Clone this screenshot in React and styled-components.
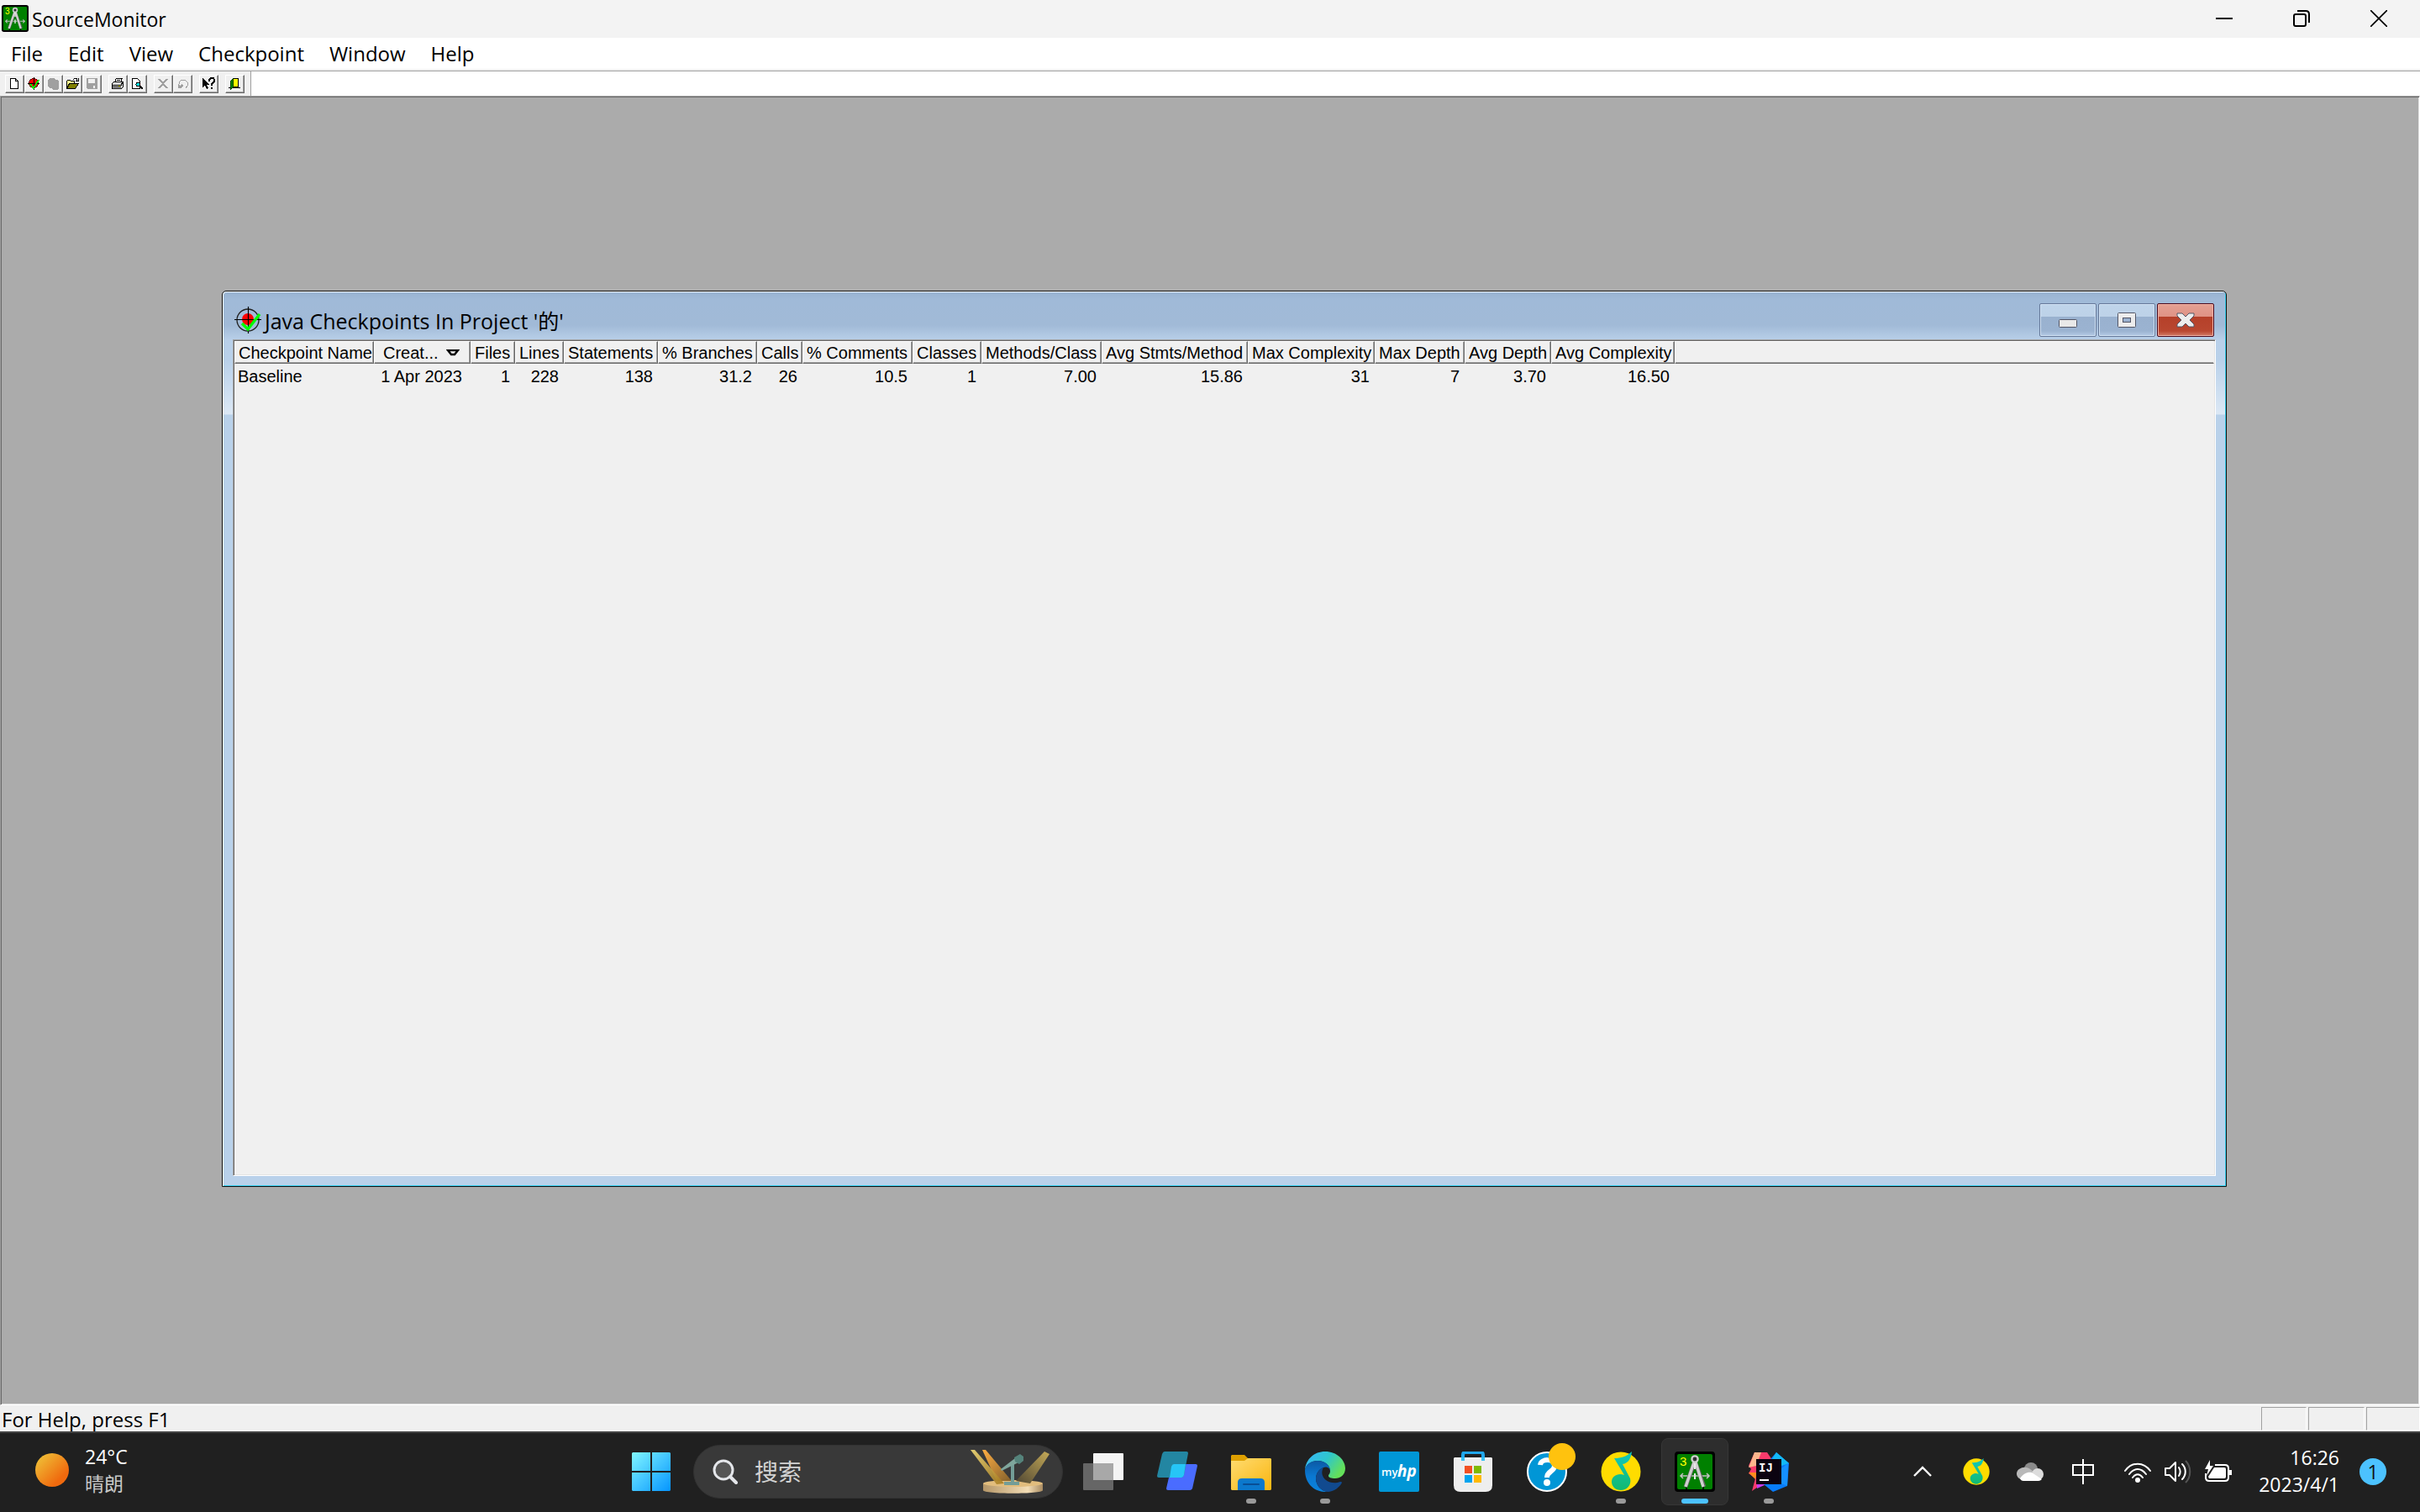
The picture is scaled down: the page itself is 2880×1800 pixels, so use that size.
import styled, { createGlobalStyle } from "styled-components";

const GlobalStyle = createGlobalStyle`
  * {
    box-sizing: border-box;
  }

  body {
    margin: 0;
    font-family: "Open Sans", "Noto Sans CJK SC", sans-serif;
    font-size: 24px;
    color: #000;
  }

  button,
  input {
    font: inherit;
    color: inherit;
    margin: 0;
    padding: 0;
    border: 0;
    background: none;
  }

  svg {
    display: block;
    flex: none;
  }
`;

const Screen = styled.div`
  display: flex;
  flex-direction: column;
  min-height: 100vh;
  background: #f0f0f0;
`;

/* ---------- main window ---------- */

const TitleBar = styled.header`
  display: flex;
  align-items: center;
  height: 45px;
  padding: 0 3px 2px 2px;
  background: #f3f3f3;
`;

const AppTitle = styled.h1`
  flex: 1;
  margin: 0;
  padding: 3px 0 0 4px;
  font-size: 23px;
  line-height: 32px;
  font-weight: 400;
`;

const CaptionButton = styled.button`
  display: flex;
  align-items: center;
  justify-content: center;
  width: 92px;
  height: 43px;
`;

const MenuBar = styled.nav`
  display: flex;
  height: 39px;
  background: #fff;
  border-bottom: 2px solid #f0f0f0;
`;

const MenuItem = styled.button`
  padding: 0 17px 0 13px;
  line-height: 37px;
`;

const ToolBar = styled.div`
  display: flex;
  height: 30px;
  background: #fff;
  border-top: 1px solid #a0a0a0;
`;

const ToolBand = styled.div`
  display: flex;
  align-items: center;
  gap: 8px;
  padding: 0 7px 0 6px;
  background: #f0f0f0;
  border-right: 1px solid #a0a0a0;
`;

const ToolGroup = styled.div`
  display: flex;
`;

const ToolButton = styled.button`
  display: flex;
  align-items: center;
  justify-content: center;
  width: 23px;
  height: 22px;
  padding: 0 2px 0 0;
  border: 1px solid;
  border-color: #fff #696969 #696969 #fff;
  box-shadow: inset -1px -1px 0 #a0a0a0;
`;

const Workspace = styled.main`
  position: relative;
  flex: 1;
  background: #ababab;
  border: 1px solid;
  border-color: #a0a0a0 #fff #fff #a0a0a0;
  box-shadow: inset 1px 1px 0 #696969, inset -1px -1px 0 #e3e3e3;
`;

const StatusBar = styled.footer`
  display: flex;
  gap: 2px;
  height: 31px;
  padding: 2px 0 1px 2px;
`;

const StatusText = styled.span`
  flex: 1;
  line-height: 30px;
`;

const StatusPane = styled.span`
  width: ${(props) => props.$width}px;
  border: 1px solid;
  border-color: #a0a0a0 #fff #fff #a0a0a0;
`;

/* ---------- checkpoints window ---------- */

const ChildWindow = styled.section`
  position: absolute;
  inset: 231px 229px 259px 263px;
  display: flex;
  flex-direction: column;
  padding: 1px 12px 12px;
  border: 1px solid #111;
  border-radius: 5px 5px 0 0;
  box-shadow: inset 1px 1px 0 #f4fafd, inset -1px -1px 0 #35d0ee;
  background: linear-gradient(
    #98b3d1 0,
    #a0bad8 10px,
    #a1bad7 40px,
    #b9d0e9 58px,
    #b9d1ea 82px,
    #dce8f5 146px,
    #b9d1ea 147px
  );
`;

const ChildTitleBar = styled.div`
  display: flex;
  align-items: flex-start;
  gap: 2px;
  height: 56px;
  padding: 13px 2px 0;
`;

const ChildIcon = styled.div`
  padding-top: 4px;
`;

const ChildTitle = styled.h2`
  flex: 1;
  margin: 0;
  padding: 5px 0 0 2px;
  font-size: 25px;
  line-height: 32px;
  font-weight: 400;
`;

const ChildButton = styled.button`
  display: flex;
  align-items: center;
  justify-content: center;
  width: 68px;
  height: 40px;
  border: 1px solid ${(props) => (props.$danger ? "#4b0a1c" : "#66799a")};
  border-radius: 2px;
  box-shadow: inset 0 0 0 1px ${(props) => (props.$danger ? "#efb0a4" : "#cfe0f2")};
  background: ${(props) =>
    props.$danger
      ? "linear-gradient(#e3a093 0, #df9285 15px, #b5402a 15px, #b94730 32px, #d27c66 38px)"
      : "linear-gradient(#bfd4ea 0, #bdd2e8 15px, #99b1cf 15px, #9bb3d1 32px, #b5cbe5 38px)"};
`;

const Client = styled.div`
  flex: 1;
  background: #f0f0f0;
  border: 1px solid;
  border-color: #a0a0a0 #fff #fff #a0a0a0;
  padding: 1px;
  box-shadow: inset 1px 1px 0 #696969, inset -1px -1px 0 #e3e3e3;
`;

const Grid = styled.table`
  width: 100%;
  table-layout: fixed;
  border-collapse: separate;
  border-spacing: 0;
  font-family: "Liberation Sans", Arial, sans-serif;
  font-size: 20px;
  line-height: 22px;
`;

const HeadCell = styled.th`
  height: 27px;
  padding: 1px 5px 0 4px;
  font-weight: 400;
  text-align: ${(props) => props.$align || "right"};
  white-space: nowrap;
  border: 1px solid;
  border-color: #fff ${(props) => (props.$last ? "#f0f0f0" : "#696969")} #696969 #fff;
  box-shadow: inset ${(props) => (props.$last ? 0 : -1)}px -1px 0 #a0a0a0;
`;

const SortLabel = styled.span`
  display: flex;
  align-items: center;
  gap: 9px;
  padding-left: 6px;
`;

const Cell = styled.td`
  height: 29px;
  padding: 0 6px 0 4px;
  text-align: ${(props) => props.$align || "right"};
  white-space: nowrap;
`;

/* ---------- taskbar ---------- */

const TaskBar = styled.footer`
  display: grid;
  grid-template-columns: 1fr auto 1fr;
  align-items: center;
  height: 96px;
  color: #fff;
  background: #202020;
  box-shadow: inset 0 2px 0 #434343;
`;

const Weather = styled.button`
  display: flex;
  align-items: center;
  justify-self: start;
  gap: 19px;
  padding: 0 0 4px 42px;
  font-size: 23px;
  line-height: 32px;
  text-align: left;
`;

const Sun = styled.span`
  width: 40px;
  height: 40px;
  border-radius: 50%;
  background: linear-gradient(135deg, #efbe36 10%, #f06a0e 75%);
`;

const Condition = styled.span`
  display: block;
  color: #c8c8c8;
`;

const Apps = styled.div`
  display: flex;
  align-items: center;
`;

const AppSlot = styled.button`
  position: relative;
  display: flex;
  align-items: center;
  justify-content: center;
  width: 80px;
  height: 80px;
  margin: 0 4px;
  border-radius: 8px;
  background: ${(props) => (props.$active ? "#2d2d2d" : "none")};
  border: 1px solid ${(props) => (props.$active ? "#363636" : "transparent")};

  &::after {
    content: "";
    position: absolute;
    bottom: 1px;
    width: ${(props) => (props.$active ? 32 : 12)}px;
    height: 6px;
    border-radius: 3px;
    background: ${(props) => (props.$active ? "#4cc2ff" : "#9a9a9a")};
    display: ${(props) => (props.$running ? "block" : "none")};
  }
`;

const SearchBox = styled.label`
  display: flex;
  align-items: center;
  width: 440px;
  height: 64px;
  margin: 0 4px 0 6px;
  padding: 0 14px 0 22px;
  border: 1px solid #323232;
  border-radius: 32px;
  background: #393939;
`;

const SearchInput = styled.input`
  flex: 1;
  min-width: 0;
  margin-left: 20px;
  font-size: 28px;
  line-height: 40px;

  &::placeholder {
    color: #d2d2d2;
    opacity: 1;
  }
`;

const Tray = styled.div`
  display: flex;
  align-items: center;
  justify-self: end;
  padding-right: 40px;
`;

const TrayButton = styled.button`
  display: flex;
  align-items: center;
  justify-content: center;
  width: 64px;
  height: 80px;
`;

const QuickSettings = styled.button`
  display: flex;
  gap: 16px;
  padding: 0 8px;
  margin-left: 8px;
`;

const Clock = styled.button`
  width: 120px;
  margin-right: 24px;
  padding-bottom: 2px;
  font-size: 23px;
  line-height: 32px;
  text-align: right;
`;

const Badge = styled.button`
  width: 32px;
  height: 32px;
  border-radius: 50%;
  font-size: 23px;
  line-height: 32px;
  color: #111;
  background: #4cc2ff;
`;

/* ---------- drawings ---------- */

const CompassIcon = ({ size }) => (
  <svg width={size} height={size} viewBox="0 0 48 48">
    <rect width="48" height="48" rx="4" fill="#000" />
    <rect x="3" y="3" width="42" height="42" rx="2" fill="#008000" />
    <text x="6" y="17" fontSize="15" fontFamily="Liberation Sans" fill="#ff0">
      3
    </text>
    <path d="M14 45v-4M34 45v-4" stroke="#000" strokeWidth="1.5" />
    <path d="M7 29h34M10 26l-3 3 3 3M38 26l3 3-3 3" fill="none" stroke="#c0c0c0" strokeWidth="1.6" />
    <path d="M23 14L13 42M25 14l10 28" stroke="#666" strokeWidth="5" />
    <path d="M23 13L13 42M25 13l9 29" stroke="#d0d0d0" strokeWidth="3.4" />
    <path d="M24 13v8M24 26v7" stroke="#e8e8e8" strokeWidth="2" />
    <circle cx="24" cy="9" r="3.6" fill="#333" stroke="#ccc" strokeWidth="2.4" />
  </svg>
);

const TargetIcon = () => (
  <svg width="32" height="32" viewBox="0 0 32 32">
    <ellipse cx="16" cy="16" rx="13" ry="13" fill="none" stroke="#222" strokeWidth="1.3" />
    <circle cx="16" cy="15" r="7" fill="#f00" />
    <path d="M16.500 0v32M0 15.500h32" stroke="#000" strokeWidth="1.2" />
    <path d="M9 20l7 7L30 9" fill="none" stroke="#0f0" strokeWidth="3.4" />
  </svg>
);

const toolIcons = {
  new: <path d="M3.500 1.500h6l3 3v9h-9zM9.500 1.500v3h3" fill="#fff" stroke="#000" />,
  checkpoint: (
    <>
      <circle cx="8" cy="7" r="5.500" fill="#f00" stroke="#600" />
      <path d="M8 0v15M1 7.500h14" stroke="#000" />
      <path d="M4 8l4 5 6-10" fill="none" stroke="#0e0" strokeWidth="2" />
    </>
  ),
  copy: <path d="M2 3l3-2h4l2 2h2l2 2v8l-2 2H8l-2-2H4l-2-3z" fill="#a0a0a0" />,
  open: (
    <>
      <path d="M1.500 13V4.500l1-1h3l1 1h4V7" fill="#ffff90" stroke="#000" />
      <path d="M1.500 13.500l3-6h11l-4 6z" fill="#808000" stroke="#000" />
      <path d="M9 2.500l2-1h2l1 2M15 1v3h-3" fill="none" stroke="#000" />
    </>
  ),
  save: (
    <>
      <path d="M2 1h13v13H3l-1-1z" fill="#a0a0a0" />
      <path d="M4 2h8v5H4zM10 10h2v3h-2z" fill="#f0f0f0" />
    </>
  ),
  print: (
    <>
      <path d="M4.500 6l2-5h7l-2 5" fill="#fff" stroke="#000" />
      <path d="M1.500 7.500l2-2h11v6l-2 2h-11z" fill="#d8d8d8" stroke="#000" />
      <path d="M2 9.500h11M2 11.500h10M7 3.500h4M14 6l-2 3" stroke="#000" />
      <path d="M9 10.500h2" stroke="#ff0" />
    </>
  ),
  preview: (
    <>
      <path d="M2.500 1.500h6l3 3v9h-9z" fill="#fff" stroke="#000" />
      <circle cx="9.500" cy="8.500" r="2.500" fill="#0ee" stroke="#000" />
      <path d="M11 10l4 4" stroke="#000" strokeWidth="2" />
    </>
  ),
  remove: <path d="M3 2l10 11M13 2L3 13" stroke="#a0a0a0" strokeWidth="2" />,
  undo: (
    <>
      <path d="M4 8V6l3-3h4l3 3v4l-2 3" fill="none" stroke="#a0a0a0" />
      <path d="M3 13V8l2 2 2-2 2 2-2 3z" fill="#a0a0a0" />
    </>
  ),
  help: (
    <>
      <path d="M1 1v11l3-2 2 4 2-1-2-4h3z" fill="#000" />
      <path d="M9 5V3l2-2h3l1 2v2l-3 3v2M12 12v2" fill="none" stroke="#000" strokeWidth="2" />
    </>
  ),
  exit: (
    <>
      <path d="M1 12.500h14" stroke="#000" />
      <path d="M6.500 1.500h6v10h-6z" fill="#ff0" stroke="#000" />
      <path d="M3.500 4.500l3-3v10l-3 3z" fill="#008000" stroke="#040" />
    </>
  ),
};

const ToolIcon = ({ name }) => (
  <svg width="16" height="15" viewBox="0 0 16 15" shapeRendering="crispEdges">
    {toolIcons[name]}
  </svg>
);

const StartIcon = () => (
  <svg width="46" height="46" viewBox="0 0 46 46">
    <defs>
      <linearGradient id="start" gradientUnits="userSpaceOnUse" x1="0" y1="0" x2="46" y2="46">
        <stop offset="0" stopColor="#80f6ff" />
        <stop offset="1" stopColor="#0595ff" />
      </linearGradient>
    </defs>
    <path
      d="M1 0h21v22H0V1zM24 0h21l1 1v21H24zM0 24h22v22H1l-1-1zM24 24h22v21l-1 1H24z"
      fill="url(#start)"
    />
  </svg>
);

const SearchIcon = () => (
  <svg width="30" height="30" viewBox="0 0 30 30" fill="none" stroke="#e4e6ea">
    <circle cx="13" cy="13" r="11" fill="#555" strokeWidth="3" />
    <path d="M21 21l7 7" strokeWidth="4" strokeLinecap="round" />
  </svg>
);

const StageIcon = () => (
  <svg width="95" height="54" viewBox="0 0 95 54">
    <defs>
      <linearGradient id="beamA" x1="0" y1="0" x2="1" y2="1">
        <stop offset="0" stopColor="#f4dc78" />
        <stop offset="1" stopColor="#a3781e" />
      </linearGradient>
      <linearGradient id="beamB" x1="0" y1="0" x2="1" y2="1">
        <stop offset="0" stopColor="#ffae42" />
        <stop offset="1" stopColor="#83602c" />
      </linearGradient>
      <linearGradient id="beamC" x1="1" y1="0" x2="0" y2="1">
        <stop offset="0" stopColor="#c4a957" />
        <stop offset="1" stopColor="#504733" />
      </linearGradient>
      <linearGradient id="stage" x1="0" y1="0" x2="1" y2="0">
        <stop offset="0" stopColor="#b49668" />
        <stop offset="0.750" stopColor="#f3ddb5" />
        <stop offset="1" stopColor="#a98b61" />
      </linearGradient>
    </defs>
    <path d="M15 41v8c0 5 71 5 71 0v-8z" fill="url(#stage)" />
    <ellipse cx="50.500" cy="41" rx="35.500" ry="4" fill="#e2bd7d" />
    <path d="M14 1h4l31 37H31z" fill="url(#beamB)" />
    <path d="M0 1h5l35 40-9 1z" fill="url(#beamA)" opacity="0.900" />
    <path d="M88 3l6 3-23 35-17-3z" fill="url(#beamC)" />
    <path d="M48 17h4v22h6v4H40v-4h8z" fill="#739d97" />
    <path d="M36 24l17-13 4 5-20 10z" fill="#7fa69c" />
    <path d="M52 10l7-4 4 3v5l-5 4-5-3z" fill="#55837b" />
  </svg>
);

const TaskViewIcon = () => (
  <svg width="48" height="48" viewBox="0 0 48 48">
    <rect x="12" y="2" width="36" height="32" rx="1" fill="#f4f4f4" />
    <rect y="14" width="36" height="32" rx="1" fill="#666" />
    <path d="M12 14h24v20H12z" fill="#a8a8a8" />
  </svg>
);

const TilesIcon = () => (
  <svg width="48" height="48" viewBox="0 0 48 48">
    <path d="M20 15h26q2 0 2 2l-6 27q-1 2-3 2H13q-2 0-2-2l6-26q1-3 3-3z" fill="#4a6cff" />
    <path d="M9 0h26q2 0 2 2l-5 26q-1 3-3 3H2q-2 0-2-2L6 3q1-3 3-3z" fill="#2386a2" />
    <path d="M20 15h14l-2 13q-1 3-3 3H15l2-13q1-3 3-3z" fill="#26c6f7" />
  </svg>
);

const FolderIcon = () => (
  <svg width="48" height="48" viewBox="0 0 48 48">
    <defs>
      <linearGradient id="folder" x1="0" y1="0" x2="1" y2="1">
        <stop offset="0" stopColor="#ffdc70" />
        <stop offset="1" stopColor="#fab510" />
      </linearGradient>
    </defs>
    <path d="M1 4h15l5 5v8H0V5z" fill="#dfa000" />
    <path d="M0 11h16l4-3h27l1 1v36l-1 1H1l-1-1z" fill="url(#folder)" />
    <path d="M8 46v-9q0-5 5-5h22q5 0 5 5v9z" fill="#0b78cc" />
    <path d="M15 39h18" stroke="#084e94" strokeWidth="2" strokeLinecap="round" />
  </svg>
);

const EdgeIcon = () => (
  <svg width="48" height="48" viewBox="0 0 48 48">
    <defs>
      <linearGradient id="edgeTop" x1="0" y1="0" x2="1" y2="0.500">
        <stop offset="0.100" stopColor="#35b8f5" />
        <stop offset="0.550" stopColor="#2fc6cb" />
        <stop offset="1" stopColor="#64e05a" />
      </linearGradient>
      <linearGradient id="edgeLeft" x1="0" y1="0" x2="0" y2="1">
        <stop offset="0" stopColor="#0c59a4" />
        <stop offset="0.500" stopColor="#0a78d2" />
        <stop offset="1" stopColor="#0b83dc" />
      </linearGradient>
    </defs>
    <path
      d="M0 22C1 9 11 0 24 0c14 0 24 10 24 20 0 8-6 12-12 12-5 0-8-1-8-3s2-2 2-6c0-6-6-12-15-12C7 11 1 16 0 22z"
      fill="url(#edgeTop)"
    />
    <path
      d="M0 22c1-7 7-11 15-11 9 0 15 5 15 12-1-5-6-5-8-4-6 2-9 8-9 13 0 8 6 15 14 16C12 49 0 39 0 22z"
      fill="url(#edgeLeft)"
    />
    <path
      d="M22 19c-6 2-9 8-9 13 0 9 7 16 15 16 7-1 13-5 16-11 0-1-1-1-2-1-5 2-12 2-17-2-5-4-6-10-3-15z"
      fill="#114a8f"
    />
  </svg>
);

const MyHpIcon = () => (
  <svg width="48" height="48" viewBox="0 0 48 48" fill="#fff">
    <rect width="48" height="48" rx="2" fill="#0096d6" />
    <text x="3" y="29" fontFamily="Open Sans" fontSize="13" fontWeight="600">
      my
    </text>
    <text x="22" y="30" fontFamily="Open Sans" fontSize="19" fontWeight="700" fontStyle="italic">
      hp
    </text>
  </svg>
);

const StoreIcon = () => (
  <svg width="46" height="48" viewBox="0 0 46 48">
    <path d="M11 11V4q0-3 3-3h18q3 0 3 3v7" fill="none" stroke="#21a7ec" strokeWidth="4" />
    <path d="M1 7h44l1 1v32q0 8-8 8H8q-8 0-8-8V8z" fill="#eee" />
    <path d="M11 7v4M35 7v4" stroke="#35c1f4" strokeWidth="4" />
    <path d="M13 17h9v9h-9z" fill="#f25022" />
    <path d="M24 17h9v9h-9z" fill="#7fba00" />
    <path d="M13 28h9v9h-9z" fill="#00a4ef" />
    <path d="M24 28h9v9h-9z" fill="#ffb900" />
  </svg>
);

const HelpIcon = () => (
  <svg width="48" height="48" viewBox="0 0 48 48" overflow="visible">
    <circle cx="24" cy="24" r="23" fill="#0096d6" stroke="#fff" strokeWidth="2" />
    <path d="M16 16c1-8 17-8 17 1 0 7-9 6-9 14" fill="none" stroke="#fff" strokeWidth="6" />
    <circle cx="24" cy="37" r="4" fill="#fff" />
    <circle cx="42" cy="6" r="16" fill="#ffc20e" />
  </svg>
);

const MusicIcon = ({ size }) => (
  <svg width={size} height={size} viewBox="0 0 48 48">
    <defs>
      <linearGradient id="note" x1="0" y1="0" x2="0" y2="1">
        <stop offset="0" stopColor="#12c8c0" />
        <stop offset="1" stopColor="#12b970" />
      </linearGradient>
    </defs>
    <circle cx="24" cy="24" r="23.500" fill="#ffdc00" />
    <path
      d="M16 8c8 0 15-2 21-8-1 8-4 14-11 15l9 17c2 8-4 14-11 14-7 0-11-5-11-10 0-7 8-11 15-8z"
      fill="url(#note)"
    />
  </svg>
);

const IntelliJIcon = () => (
  <svg width="48" height="48" viewBox="0 0 48 48">
    <path d="M7 1l15 0 6 9-14 30L4 47l4-15-8-6 3-5-3-4z" fill="#f93a6b" />
    <path d="M7 1l8 0-6 16-9 2z" fill="#fdb68c" />
    <path d="M0 25l10 0-2 8z" fill="#ff8b1e" />
    <path d="M9 31l12 8-11 5z" fill="#c73cf0" />
    <path d="M33 1l15 13-2 27-17 7-11-9 8-30z" fill="#087cfa" />
    <path d="M33 1l15 13-9 3-13-5z" fill="#13b9f5" />
    <path d="M39 20l8-6-1 27-7-3z" fill="#1590ff" />
    <path d="M9 9h30v30H9z" fill="#0b0310" />
    <text x="12" y="24" fontFamily="Liberation Mono" fontSize="14" fontWeight="700" fill="#fff">
      IJ
    </text>
    <path d="M13 33h11v2H13z" fill="#fff" />
  </svg>
);

const CloudIcon = () => (
  <svg width="32" height="22" viewBox="0 0 32 22">
    <circle cx="17" cy="8" r="8" fill="#8b8b8b" />
    <path d="M8 6c5-1 8 2 12 5L5 20C-3 17-1 7 8 6z" fill="#b9b9b9" />
    <circle cx="25" cy="14" r="7" fill="#dcdcdc" />
    <path d="M4 19c4-6 9-8 14-7l12 8q-2 2-4 2H8q-3 0-4-3z" fill="#fff" />
  </svg>
);

const WifiIcon = () => (
  <svg width="32" height="28" viewBox="0 0 32 28" fill="none" stroke="#fff" strokeWidth="2">
    <path d="M1 13C9 2 23 2 31 13M6 17c6-8 14-8 20 0M10 21c4-5 8-5 12 0" strokeLinecap="round" />
    <circle cx="16" cy="24" r="2" fill="#fff" />
  </svg>
);

const SpeakerIcon = () => (
  <svg width="32" height="28" viewBox="0 0 32 28" fill="none" stroke="#fff" strokeWidth="2">
    <path d="M1 10h5l7-7v22l-7-7H1z" strokeLinejoin="round" />
    <path d="M17 9c2 3 2 7 0 10M21 5c5 5 5 13 0 18" strokeLinecap="round" />
    <path d="M25 1c7 7 7 19 0 26" stroke="#555" />
  </svg>
);

const BatteryIcon = () => (
  <svg width="32" height="28" viewBox="0 0 32 28" fill="none" stroke="#fff" strokeWidth="2">
    <path d="M12 6h12q4 0 4 4v11q0 4-4 4H5q-4 0-4-4v-5" />
    <path d="M11 9h12q2 0 2 2v9q0 2-2 2H5l-1-2z" fill="#fff" stroke="none" />
    <path d="M28 12h4v6h-4z" fill="#fff" stroke="none" />
    <path d="M6 0L0 11h4l-2 8 8-12H6z" fill="#fff" stroke="none" />
  </svg>
);

/* ---------- data ---------- */

const menus = ["File", "Edit", "View", "Checkpoint", "Window", "Help"];

const tools = [
  ["new", "checkpoint", "copy", "open", "save"],
  ["print", "preview"],
  ["remove", "undo"],
  ["help"],
  ["exit"],
];

const columns = [
  { label: "Checkpoint Name", width: 166, value: "Baseline", align: "left" },
  { label: "Creat...", width: 115, value: "1 Apr 2023", align: "center", sorted: true },
  { label: "Files", width: 53, value: "1" },
  { label: "Lines", width: 58, value: "228" },
  { label: "Statements", width: 112, value: "138" },
  { label: "% Branches", width: 118, value: "31.2" },
  { label: "Calls", width: 54, value: "26" },
  { label: "% Comments", width: 131, value: "10.5" },
  { label: "Classes", width: 82, value: "1" },
  { label: "Methods/Class", width: 143, value: "7.00" },
  { label: "Avg Stmts/Method", width: 174, value: "15.86" },
  { label: "Max Complexity", width: 151, value: "31" },
  { label: "Max Depth", width: 107, value: "7" },
  { label: "Avg Depth", width: 103, value: "3.70" },
  { label: "Avg Complexity", width: 147, value: "16.50" },
];

const apps = [
  { name: "Task View", icon: <TaskViewIcon /> },
  { name: "Tiles", icon: <TilesIcon /> },
  { name: "Explorer", icon: <FolderIcon />, running: true },
  { name: "Edge", icon: <EdgeIcon />, running: true },
  { name: "myHP", icon: <MyHpIcon /> },
  { name: "Store", icon: <StoreIcon /> },
  { name: "Support", icon: <HelpIcon /> },
  { name: "Music", icon: <MusicIcon size={48} />, running: true },
  { name: "SourceMonitor", icon: <CompassIcon size={48} />, running: true, active: true },
  { name: "IntelliJ", icon: <IntelliJIcon />, running: true },
];

const CheckpointTable = () => (
  <Grid>
    <colgroup>
      {columns.map((col) => (
        <col key={col.label} style={{ width: col.width }} />
      ))}
      <col />
    </colgroup>
    <thead>
      <tr>
        {columns.map((col) => (
          <HeadCell key={col.label} scope="col" $align={col.align === "left" ? "left" : "right"}>
            {col.sorted ? (
              <SortLabel>
                {col.label}
                <svg width="16" height="8" viewBox="0 0 16 8">
                  <path d="M2 1h12l-4 5H6z" fill="#f0f0f0" stroke="#000" strokeWidth="2.4" />
                </svg>
              </SortLabel>
            ) : (
              col.label
            )}
          </HeadCell>
        ))}
        <HeadCell as="td" $last />
      </tr>
    </thead>
    <tbody>
      <tr>
        {columns.map((col) => (
          <Cell key={col.label} $align={col.align}>
            {col.value}
          </Cell>
        ))}
        <Cell />
      </tr>
    </tbody>
  </Grid>
);

const CheckpointWindow = () => (
  <ChildWindow>
    <ChildTitleBar>
      <ChildIcon>
        <TargetIcon />
      </ChildIcon>
      <ChildTitle>Java Checkpoints In Project '的'</ChildTitle>
      <ChildButton aria-label="Minimize">
        <svg width="22" height="20" viewBox="0 0 22 20">
          <rect x="0.500" y="9.500" width="21" height="9" rx="1" fill="#e8e8e8" stroke="#535666" />
        </svg>
      </ChildButton>
      <ChildButton aria-label="Maximize">
        <svg width="22" height="18" viewBox="0 0 22 18" stroke="#535666">
          <rect x="0.500" y="0.500" width="21" height="17" rx="1" fill="#ececec" />
          <rect x="6.500" y="6.500" width="9" height="5" fill="#9ab1cf" />
        </svg>
      </ChildButton>
      <ChildButton $danger aria-label="Close">
        <svg width="22" height="18" viewBox="0 0 22 18">
          <path
            d="M1 1h6l4 4 4-4h6v3l-5 5 5 5v3h-6l-4-4-4 4H1v-3l5-5-5-5z"
            fill="#ededed"
            stroke="#535666"
            strokeLinejoin="round"
          />
        </svg>
      </ChildButton>
    </ChildTitleBar>
    <Client>
      <CheckpointTable />
    </Client>
  </ChildWindow>
);

const App = () => {
  return (
    <Screen>
      <GlobalStyle />

      <TitleBar>
        <CompassIcon size={32} />
        <AppTitle>SourceMonitor</AppTitle>
        <CaptionButton aria-label="Minimize">
          <svg width="20" height="20" viewBox="0 0 20 20">
            <path d="M0 9h20v2H0z" />
          </svg>
        </CaptionButton>
        <CaptionButton aria-label="Restore">
          <svg width="20" height="20" viewBox="0 0 20 20" fill="none" stroke="#000" strokeWidth="2">
            <rect x="1" y="5" width="14" height="14" rx="2" />
            <path d="M5 1h10q4 0 4 4v10" />
          </svg>
        </CaptionButton>
        <CaptionButton aria-label="Close">
          <svg width="20" height="20" viewBox="0 0 20 20" stroke="#000" strokeWidth="1.600">
            <path d="M0 0l20 20M20 0L0 20" />
          </svg>
        </CaptionButton>
      </TitleBar>

      <MenuBar>
        {menus.map((menu) => (
          <MenuItem key={menu}>{menu}</MenuItem>
        ))}
      </MenuBar>

      <ToolBar>
        <ToolBand>
          {tools.map((group) => (
            <ToolGroup key={group[0]}>
              {group.map((name) => (
                <ToolButton key={name} aria-label={name}>
                  <ToolIcon name={name} />
                </ToolButton>
              ))}
            </ToolGroup>
          ))}
        </ToolBand>
      </ToolBar>

      <Workspace>
        <CheckpointWindow />
      </Workspace>

      <StatusBar>
        <StatusText>For Help, press F1</StatusText>
        <StatusPane $width={54} />
        <StatusPane $width={67} />
        <StatusPane $width={64} />
      </StatusBar>

      <TaskBar>
        <Weather>
          <Sun />
          <span>
            24°C
            <Condition>晴朗</Condition>
          </span>
        </Weather>

        <Apps>
          <AppSlot aria-label="Start">
            <StartIcon />
          </AppSlot>
          <SearchBox>
            <SearchIcon />
            <SearchInput type="search" placeholder="搜索" aria-label="搜索" />
            <StageIcon />
          </SearchBox>
          {apps.map((app) => (
            <AppSlot key={app.name} aria-label={app.name} $running={app.running} $active={app.active}>
              {app.icon}
            </AppSlot>
          ))}
        </Apps>

        <Tray>
          <TrayButton aria-label="Hidden icons">
            <svg width="22" height="14" viewBox="0 0 22 14">
              <path d="M1 12L11 2l10 10" fill="none" stroke="#fff" strokeWidth="2.400" />
            </svg>
          </TrayButton>
          <TrayButton aria-label="Music">
            <MusicIcon size={32} />
          </TrayButton>
          <TrayButton aria-label="OneDrive">
            <CloudIcon />
          </TrayButton>
          <TrayButton aria-label="Input method">
            <svg width="28" height="30" viewBox="0 0 28 30" fill="none" stroke="#fff" strokeWidth="2">
              <path d="M1 7h24v12H1zM13 0v30" />
            </svg>
          </TrayButton>
          <QuickSettings aria-label="Quick settings">
            <WifiIcon />
            <SpeakerIcon />
            <BatteryIcon />
          </QuickSettings>
          <Clock>
            16:26
            <br />
            2023/4/1
          </Clock>
          <Badge>1</Badge>
        </Tray>
      </TaskBar>
    </Screen>
  );
};

export default App;
